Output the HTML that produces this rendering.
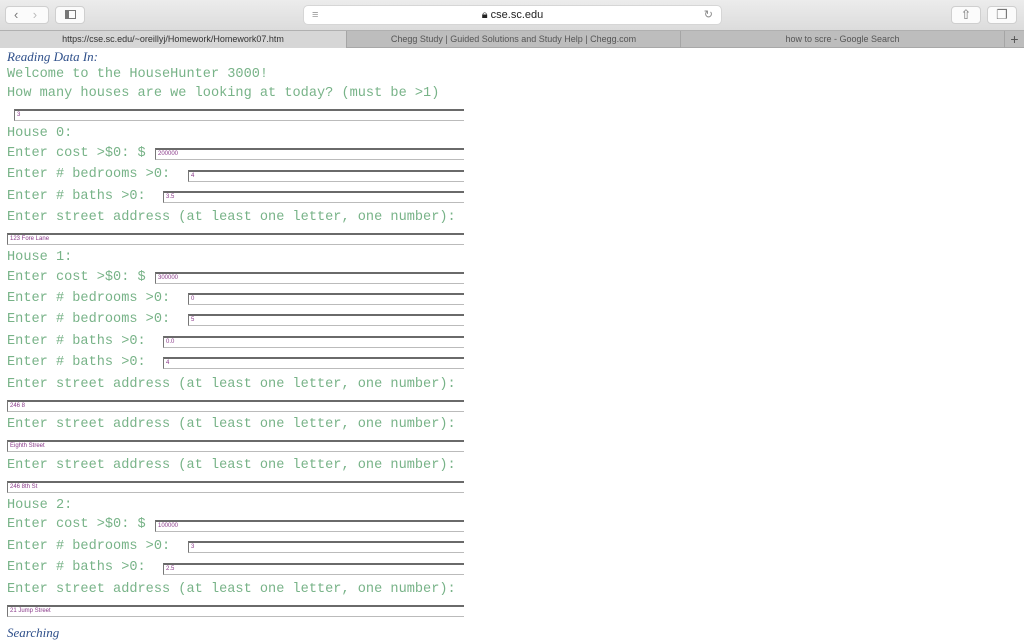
<!DOCTYPE html>
<html><head><meta charset="utf-8"><style>
*{margin:0;padding:0;box-sizing:border-box}
body{width:1024px;height:640px;overflow:hidden;background:#fff;position:relative;font-family:"Liberation Sans",sans-serif}
.tb{position:absolute;left:0;top:0;width:1024px;height:30px;background:linear-gradient(#ececec,#dcdcdc)}
.btn{position:absolute;top:6px;height:18px;background:#fbfbfb;border:1px solid #cfcfcf;border-radius:4px;color:#777;font-size:13px;text-align:center;line-height:15px}
.url{position:absolute;left:303px;top:5px;width:419px;height:20px;background:#fff;border:1px solid #d6d6d6;border-radius:5px;font-size:11px;color:#222;text-align:center;line-height:18px}
.tabs{position:absolute;left:0;top:30px;width:1024px;height:18px;background:#bdbdbd;border-top:1px solid #b0b0b0;border-bottom:1px solid #a8a8a8}
.tab{position:absolute;top:0;height:17px;font-size:9px;color:#555;text-align:center;line-height:16px;border-left:1px solid #a5a5a5}
.t{position:absolute;left:7px;font-family:"Liberation Mono",monospace;font-size:13.6px;color:#78b388;white-space:pre;line-height:16px;margin-top:2px}
.h{position:absolute;left:7px;font-family:"Liberation Serif",serif;font-style:italic;font-size:13px;color:#2e4f8a}
.i{position:absolute;right:560px;height:12px;border-top:2px solid #6a6a6a;border-left:1px solid #777;border-bottom:1px solid #bbb;font-size:6px;color:#8a3a8a;padding-left:2px;line-height:9px;font-family:"Liberation Sans",sans-serif}
</style></head><body>
<div class="tb">
<div class="btn" style="left:5px;width:44px;text-align:left;padding-left:8px">&#8249;&nbsp;&nbsp;&nbsp;&nbsp;<span style="color:#bbb">&#8250;</span></div>
<div class="btn" style="left:55px;width:30px"><span style="display:inline-block;width:11px;height:9px;border:1px solid #777;margin-top:3px;border-left-width:4px"></span></div>
<div class="url"><span style="position:absolute;left:8px;top:0;color:#999">&#8801;</span>&#128274;&#xFE0E; cse.sc.edu<span style="position:absolute;right:8px;top:0;color:#888">&#8635;</span></div>
<div class="btn" style="left:951px;width:30px">&#8679;</div>
<div class="btn" style="left:987px;width:30px">&#10064;</div>
</div>
<div class="tabs">
<div class="tab" style="left:0;width:346px;background:#d6d6d6;color:#333;border-left:none">https://cse.sc.edu/~oreillyj/Homework/Homework07.htm</div>
<div class="tab" style="left:346px;width:334px">Chegg Study | Guided Solutions and Study Help | Chegg.com</div>
<div class="tab" style="left:680px;width:324px">how to scre - Google Search</div>
<div class="tab" style="left:1004px;width:20px;font-size:14px">+</div>
</div>
<div class="h" style="top:49px">Reading Data In:</div>
<div class="t" style="top:65px">Welcome to the HouseHunter 3000!</div>
<div class="t" style="top:84px">How many houses are we looking at today? (must be &gt;1)</div>
<div class="i" style="left:14px;top:109px">3</div>
<div class="t" style="top:124px">House 0:</div>
<div class="t" style="top:144px">Enter cost &gt;$0: $</div><div class="i" style="left:155px;top:148px">200000</div>
<div class="t" style="top:165px">Enter # bedrooms &gt;0:</div><div class="i" style="left:188px;top:170px">4</div>
<div class="t" style="top:187px">Enter # baths &gt;0:</div><div class="i" style="left:163px;top:191px">3.5</div>
<div class="t" style="top:208px">Enter street address (at least one letter, one number):</div>
<div class="i" style="left:7px;top:233px">123 Fore Lane</div>
<div class="t" style="top:248px">House 1:</div>
<div class="t" style="top:268px">Enter cost &gt;$0: $</div><div class="i" style="left:155px;top:272px">300000</div>
<div class="t" style="top:289px">Enter # bedrooms &gt;0:</div><div class="i" style="left:188px;top:293px">0</div>
<div class="t" style="top:310px">Enter # bedrooms &gt;0:</div><div class="i" style="left:188px;top:314px">5</div>
<div class="t" style="top:332px">Enter # baths &gt;0:</div><div class="i" style="left:163px;top:336px">0.0</div>
<div class="t" style="top:353px">Enter # baths &gt;0:</div><div class="i" style="left:163px;top:357px">4</div>
<div class="t" style="top:375px">Enter street address (at least one letter, one number):</div>
<div class="i" style="left:7px;top:400px">246 8</div>
<div class="t" style="top:415px">Enter street address (at least one letter, one number):</div>
<div class="i" style="left:7px;top:440px">Eighth Street</div>
<div class="t" style="top:456px">Enter street address (at least one letter, one number):</div>
<div class="i" style="left:7px;top:481px">246 8th St</div>
<div class="t" style="top:496px">House 2:</div>
<div class="t" style="top:515px">Enter cost &gt;$0: $</div><div class="i" style="left:155px;top:520px">100000</div>
<div class="t" style="top:537px">Enter # bedrooms &gt;0:</div><div class="i" style="left:188px;top:541px">3</div>
<div class="t" style="top:558px">Enter # baths &gt;0:</div><div class="i" style="left:163px;top:563px">2.5</div>
<div class="t" style="top:580px">Enter street address (at least one letter, one number):</div>
<div class="i" style="left:7px;top:605px">21 Jump Street</div>
<div class="h" style="top:625px">Searching</div>
</body></html>
